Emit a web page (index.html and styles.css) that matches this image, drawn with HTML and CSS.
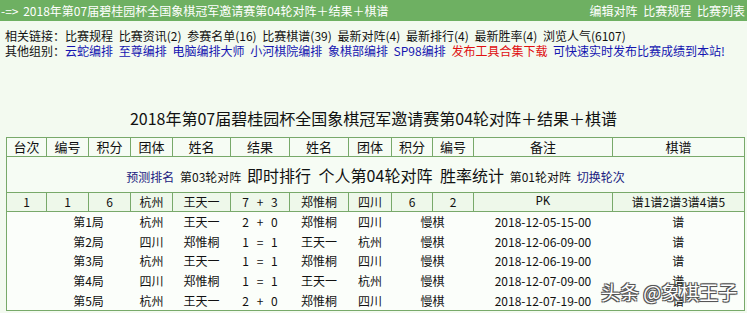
FILE: index.html
```html
<!DOCTYPE html>
<html lang="zh">
<head>
<meta charset="utf-8">
<link rel="stylesheet" href="styles.css">
</head>
<body>
<div class="topbar">
  <span class="crumb">-=&gt; 2018年第07届碧桂园杯全国象棋冠军邀请赛第04轮对阵＋结果＋棋谱</span>
  <span class="toplinks"><a>编辑对阵</a> <a>比赛规程</a> <a>比赛列表</a></span>
</div>
<div class="links">
  <div class="linkrow">相关链接：<a>比赛规程</a> <a>比赛资讯(2)</a> <a>参赛名单(16)</a> <a>比赛棋谱(39)</a> <a>最新对阵(4)</a> <a>最新排行(4)</a> <a>最新胜率(4)</a> <a>浏览人气(6107)</a></div>
  <div class="linkrow">其他组别：<a class="blue">云蛇编排</a> <a class="blue">至尊编排</a> <a class="blue">电脑编排大师</a> <a class="blue">小河棋院编排</a> <a class="blue">象棋部编排</a> <a class="blue">SP98编排</a> <a class="red">发布工具合集下载</a> <a class="blue">可快速实时发布比赛成绩到本站!</a></div>
</div>
<h1 class="title">2018年第07届碧桂园杯全国象棋冠军邀请赛第04轮对阵＋结果＋棋谱</h1>
<table class="grid">
  <colgroup>
    <col class="c40"><col class="c42"><col class="c42"><col class="c42"><col class="c58"><col class="c59"><col class="c59"><col class="c43"><col class="c41"><col class="c41"><col class="c139"><col class="c132">
  </colgroup>
  <tr class="head">
    <td>台次</td><td>编号</td><td>积分</td><td>团体</td><td>姓名</td><td>结果</td><td>姓名</td><td>团体</td><td>积分</td><td>编号</td><td>备注</td><td>棋谱</td>
  </tr>
  <tr class="nav">
    <td colspan="12"><a class="navy sm">预测排名</a> <span class="sm">第03轮对阵</span> <span class="big">即时排行 个人第04轮对阵 胜率统计</span> <span class="sm">第01轮对阵</span> <a class="navy sm">切换轮次</a></td>
  </tr>
  <tr class="main">
    <td>1</td><td>1</td><td>6</td><td>杭州</td><td>王天一</td><td class="res">7 + 3</td><td>郑惟桐</td><td>四川</td><td>6</td><td>2</td><td class="mono">PK</td><td>谱1谱2谱3谱4谱5</td>
  </tr>
  <tr class="sub"><td></td><td colspan="2">第1局</td><td>杭州</td><td>王天一</td><td class="res">2 + 0</td><td>郑惟桐</td><td>四川</td><td colspan="2">慢棋</td><td>2018-12-05-15-00</td><td>谱</td></tr>
  <tr class="sub"><td></td><td colspan="2">第2局</td><td>四川</td><td>郑惟桐</td><td class="res">1 = 1</td><td>王天一</td><td>杭州</td><td colspan="2">慢棋</td><td>2018-12-06-09-00</td><td>谱</td></tr>
  <tr class="sub"><td></td><td colspan="2">第3局</td><td>杭州</td><td>王天一</td><td class="res">1 = 1</td><td>郑惟桐</td><td>四川</td><td colspan="2">慢棋</td><td>2018-12-06-19-00</td><td>谱</td></tr>
  <tr class="sub"><td></td><td colspan="2">第4局</td><td>四川</td><td>郑惟桐</td><td class="res">1 = 1</td><td>王天一</td><td>杭州</td><td colspan="2">慢棋</td><td>2018-12-07-09-00</td><td>谱</td></tr>
  <tr class="sub"><td></td><td colspan="2">第5局</td><td>杭州</td><td>王天一</td><td class="res">2 + 0</td><td>郑惟桐</td><td>四川</td><td colspan="2">慢棋</td><td>2018-12-07-19-00</td><td>谱</td></tr>
</table>
<div class="watermark">头条 @象棋王子</div>
</body>
</html>
```

FILE: styles.css
```css
html, body {
  margin: 0;
  padding: 0;
}
body {
  background: #f3faf0;
  font-family: "Noto Sans CJK SC", "Noto Sans", sans-serif;
  font-size: 12px;
  color: #111;
  position: relative;
  height: 313px;
  overflow: hidden;
  word-spacing: 3px;
}
a { color: inherit; text-decoration: none; }
.topbar {
  height: 21px;
  background: #6eb062;
  color: #fff;
  display: flex;
  justify-content: space-between;
  align-items: center;
  padding: 0 2px 0 1px;
  font-size: 12px;
}
.crumb { word-spacing: 2px; }
.links {
  padding: 7px 0 0 5px;
  line-height: 15px;
  font-size: 12px;
}
.blue { color: #1515b0; }
.red { color: #e01010; }
.navy { color: #202080; }
.title {
  margin: 50px 0 0;
  text-align: center;
  font-size: 16px;
  font-weight: normal;
  line-height: 20px;
  color: #111;
}
.grid {
  margin: 9px 0 0 6px;
  width: 738px;
  table-layout: fixed;
  border-collapse: collapse;
  border: 1px solid #78a96a;
  background: #f6fcf4;
}
.c40 { width: 40px; }
.c41 { width: 41px; }
.c42 { width: 42px; }
.c43 { width: 43px; }
.c58 { width: 58px; }
.c59 { width: 59px; }
.c132 { width: 132px; }
.c139 { width: 139px; }
.grid td {
  text-align: center;
  padding: 0;
  white-space: nowrap;
  overflow: hidden;
}
.head td, .nav td, .main td {
  border: 1px solid #78a96a;
}
.head td {
  height: 18px;
  font-size: 13px;
  line-height: 18px;
}
.nav td {
  height: 35px;
  vertical-align: middle;
}
.sm { font-size: 12px; }
.big { font-size: 16px; word-spacing: 4px; }
.main td {
  height: 18px;
  line-height: 18px;
  background: #eef8ea;
}
.sub td {
  height: 19.6px;
  line-height: 19px;
  background: #fbfefa;
}
.res { word-spacing: 5px; }
.mono { font-family: "Liberation Mono", monospace; }
.watermark {
  position: absolute;
  left: 601px;
  top: 280px;
  font-size: 19px;
  line-height: 24px;
  white-space: nowrap;
  word-spacing: 0;
  color: #fff;
  text-shadow: -1px -1px 0 #555, 1px -1px 0 #555, -1px 1px 0 #555, 1px 1px 0 #555, 0 0 2px #333;
}
```
